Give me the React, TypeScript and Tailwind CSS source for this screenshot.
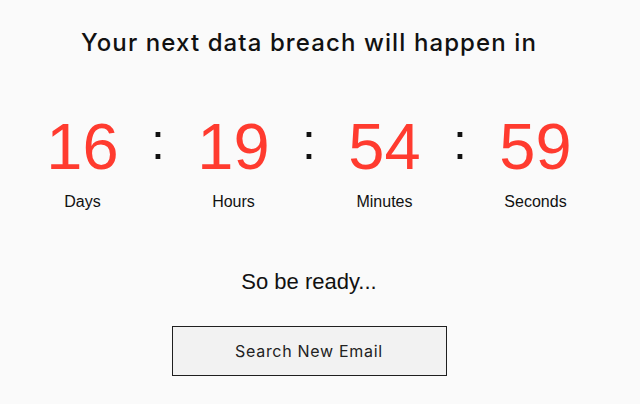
import React from "react";

const units = [
  { value: "16", label: "Days" },
  { value: "19", label: "Hours" },
  { value: "54", label: "Minutes" },
  { value: "59", label: "Seconds" },
];

export default function App() {
  return (
    <div className="min-h-[404px] w-full bg-[#fafafa]">
      <div className="flex w-[618px] flex-col items-center">
        <h1 className="pt-[27px] text-[24px] leading-[32px] font-medium tracking-[1.1px] text-[#111111] [font-family:Inter,'Noto_Sans',sans-serif]">
          Your next data breach will happen in
        </h1>

        <div className="mt-[55px] flex items-start [font-family:'Liberation_Sans',Arial,sans-serif]">
          {units.map((u, i) => (
            <React.Fragment key={u.label}>
              {i > 0 && (
                <div className="mt-[3px] w-[55px] text-center text-[50px] leading-[50px] text-[#111111]">
                  :
                </div>
              )}
              <div className="flex w-[96px] flex-col items-center">
                <div className="text-[65px] leading-[65px] text-[#ff3b2f]">{u.value}</div>
                <div className="mt-[13px] text-[16px] leading-[20px] text-[#111111]">{u.label}</div>
              </div>
            </React.Fragment>
          ))}
        </div>

        <p className="mt-[56px] text-[22px] leading-[28px] text-[#111111] [font-family:'Liberation_Sans',Arial,sans-serif]">
          So be ready...
        </p>

        <button className="mt-[30px] flex h-[50px] w-[275px] items-center justify-center border border-[#1f1f1f] bg-[#f2f2f2] text-[16px] tracking-[0.7px] text-[#222222] [font-family:Inter,'Noto_Sans',sans-serif]">
          Search New Email
        </button>
      </div>
    </div>
  );
}
